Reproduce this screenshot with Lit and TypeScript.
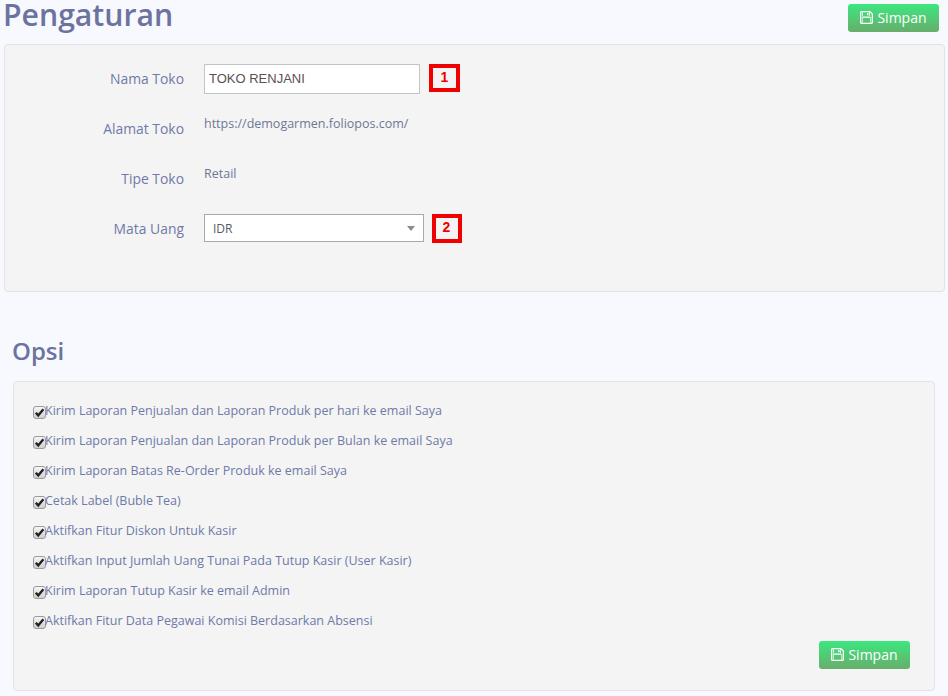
import { LitElement, html, css, svg } from "lit";
import { customElement } from "lit/decorators.js";

const saveIcon = svg`<path fill="currentColor" fill-rule="evenodd" d="M1.5 0H10.2L13 2.8V11.5C13 12.3 12.3 13 11.5 13H1.5C.7 13 0 12.3 0 11.5V1.5C0 .7.7 0 1.5 0ZM3 1.3V4.9H9.2V1.3ZM7.1 1.9H8.5V4.2H7.1ZM2.6 7V11.7H10.4V7ZM1.3 1.3V11.7H1.9V6.3H11.1V11.7H11.7V3.3L10 1.5V5.6H2.3V1.3Z"/>`;

const options = [
  "Kirim Laporan Penjualan dan Laporan Produk per hari ke email Saya",
  "Kirim Laporan Penjualan dan Laporan Produk per Bulan ke email Saya",
  "Kirim Laporan Batas Re-Order Produk ke email Saya",
  "Cetak Label (Buble Tea)",
  "Aktifkan Fitur Diskon Untuk Kasir",
  "Aktifkan Input Jumlah Uang Tunai Pada Tutup Kasir (User Kasir)",
  "Kirim Laporan Tutup Kasir ke email Admin",
  "Aktifkan Fitur Data Pegawai Komisi Berdasarkan Absensi",
];

@customElement("app-root")
export class AppRoot extends LitElement {
  static styles = css`
    :host {
      display: block;
      width: 948px;
      height: 696px;
      overflow: hidden;
      background: #f7f9ff;
      font-family: "Open Sans", sans-serif;
      color: #6c75a6;
      box-sizing: border-box;
    }
    .head {
      display: flex;
      justify-content: space-between;
      height: 44px;
      padding: 0 9px 0 3px;
    }
    h1 {
      margin: 0;
      font-size: 30.2px;
      line-height: 30px;
      font-weight: 600;
      color: #6c739f;
    }
    .btn {
      display: flex;
      align-items: center;
      justify-content: center;
      gap: 4px;
      width: 91px;
      height: 28px;
      padding-bottom: 1px;
      border-radius: 3px;
      background: linear-gradient(#3ce77f, #67ae6c);
      color: #fff;
      font-size: 14px;
      box-sizing: border-box;
    }
    .head .btn {
      margin-top: 4px;
    }
    .btn svg {
      width: 13px;
      height: 13px;
      flex: none;
    }
    .panel {
      background: #f4f4f4;
      border: 1px solid #e3e3e6;
      border-radius: 4px;
      box-sizing: border-box;
    }
    .settings {
      margin: 0 3px 0 4px;
      height: 248px;
      padding: 19px 0 0 0;
      display: flex;
      flex-direction: column;
      gap: 20px;
    }
    .row {
      display: grid;
      grid-template-columns: 179px auto auto 1fr;
      column-gap: 20px;
      height: 30px;
      align-items: start;
      font-size: 13.9px;
      line-height: 30px;
    }
    .lbl {
      text-align: right;
      color: #7079a8;
    }
    .val {
      font-size: 12.5px;
      line-height: 18px;
      color: #6e7896;
      margin-top: 1px;
    }
    .input {
      width: 216px;
      height: 30px;
      box-sizing: border-box;
      background: #fff;
      border: 1px solid #c4c4c4;
      padding: 0 4px;
      font-family: "Liberation Sans", sans-serif;
      font-size: 13px;
      line-height: 27px;
      color: #5a5050;
    }
    .select {
      width: 220px;
      height: 28px;
      box-sizing: border-box;
      background: #fff;
      border: 1px solid #a9a9a9;
      padding: 2px 9px 0 8px;
      display: flex;
      align-items: center;
      justify-content: space-between;
      font-size: 12px;
      color: #555a66;
    }
    .select .caret {
      margin: 0 -1px 2px 0;
    }
    .caret {
      width: 0;
      height: 0;
      border-left: 4px solid transparent;
      border-right: 4px solid transparent;
      border-top: 5px solid #8c8c8c;
    }
    .badge {
      box-sizing: border-box;
      border: 4px solid #f00000;
      background: #f4f4f4;
      display: flex;
      align-items: center;
      justify-content: center;
      font-family: "Liberation Sans", sans-serif;
      font-weight: 700;
      font-size: 14px;
      line-height: 1;
      color: #f00000;
      padding-bottom: 2px;
    }
    .b1 {
      width: 31px;
      height: 28px;
      margin-left: -11px;
    }
    .b2 {
      width: 30px;
      height: 29px;
      margin-left: -12px;
      padding: 0 1px 3px 0;
    }
    h2 {
      margin: 42px 0 0 12px;
      font-size: 24px;
      line-height: 34px;
      font-weight: 600;
      color: #6c739f;
    }
    .options {
      margin: 13px 13px 0 13px;
      height: 310px;
      padding: 14px 24px 0 19px;
    }
    .opt {
      display: flex;
      height: 30px;
      font-size: 12.5px;
      line-height: 30px;
      color: #6e7aa8;
    }
    .opt span:last-child {
      margin-left: -1px;
    }
    .cb {
      width: 13px;
      height: 13px;
      margin-top: 10px;
      flex: none;
      box-sizing: border-box;
      border: 1px solid #9a9a9a;
      border-radius: 3px;
      background: linear-gradient(#f6f6f6, #cfcfcf);
      display: block;
    }
    .cb svg {
      display: block;
      width: 11px;
      height: 11px;
    }
    .foot {
      display: flex;
      justify-content: flex-end;
      margin-top: 5px;
    }
  `;

  private save() {
    return html`<div class="btn"><svg viewBox="0 0 13 13">${saveIcon}</svg><span>Simpan</span></div>`;
  }

  render() {
    return html`
      <div class="head"><h1>Pengaturan</h1>${this.save()}</div>
      <div class="panel settings">
        <div class="row">
          <div class="lbl">Nama Toko</div>
          <div class="input">TOKO RENJANI</div>
          <div class="badge b1">1</div>
        </div>
        <div class="row">
          <div class="lbl">Alamat Toko</div>
          <div class="val">https://demogarmen.foliopos.com/</div>
        </div>
        <div class="row">
          <div class="lbl">Tipe Toko</div>
          <div class="val">Retail</div>
        </div>
        <div class="row">
          <div class="lbl">Mata Uang</div>
          <div class="select"><span>IDR</span><span class="caret"></span></div>
          <div class="badge b2">2</div>
        </div>
      </div>
      <h2>Opsi</h2>
      <div class="panel options">
        ${options.map(
          (o) => html`<div class="opt">
            <span class="cb"><svg viewBox="0 0 11 11"><path d="M1.8 5.8 4.2 8.4 9.4 2.2" fill="none" stroke="#222" stroke-width="2.4"/></svg></span>
            <span>${o}</span>
          </div>`
        )}
        <div class="foot">${this.save()}</div>
      </div>
    `;
  }
}
